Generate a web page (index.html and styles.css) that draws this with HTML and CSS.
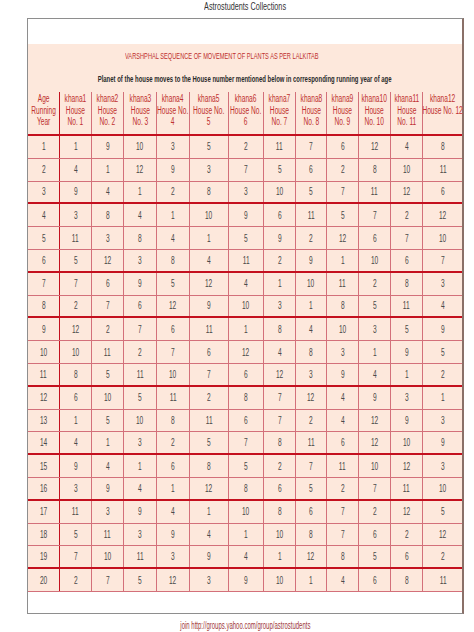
FILE: index.html
```html
<!DOCTYPE html>
<html>
<head>
<meta charset="utf-8">
<link rel="stylesheet" href="styles.css">
</head>
<body>
<div class="page-title"><span class="sq">Astrostudents Collections</span></div>
<div class="frame">
  <div class="gap"></div>
  <div class="sheet">
    <div class="heading">
      <div class="title"><span class="sq">VARSHPHAL SEQUENCE OF MOVEMENT OF PLANTS AS PER LALKITAB</span></div>
      <div class="subtitle"><span class="sq">Planet of the house moves to the House number mentioned below in corresponding running year of age</span></div>
    </div>
    <div class="grid">
      <div class="row head thick">
        <div class="c"><span>Age<br>Running<br>Year</span></div>
        <div class="c"><span>khana1<br>House<br>No. 1</span></div>
        <div class="c"><span>khana2<br>House<br>No. 2</span></div>
        <div class="c"><span>khana3<br>House<br>No. 3</span></div>
        <div class="c"><span>khana4<br>House No.<br>4</span></div>
        <div class="c"><span>khana5<br>House No.<br>5</span></div>
        <div class="c"><span>khana6<br>House No.<br>6</span></div>
        <div class="c"><span>khana7<br>House<br>No. 7</span></div>
        <div class="c"><span>khana8<br>House<br>No. 8</span></div>
        <div class="c"><span>khana9<br>House<br>No. 9</span></div>
        <div class="c"><span>khana10<br>House<br>No. 10</span></div>
        <div class="c"><span>khana11<br>House<br>No. 11</span></div>
        <div class="c"><span>khana12<br>House No. 12</span></div>
      </div>
      <div class="row"><div class="c"><span>1</span></div><div class="c"><span>1</span></div><div class="c"><span>9</span></div><div class="c"><span>10</span></div><div class="c"><span>3</span></div><div class="c"><span>5</span></div><div class="c"><span>2</span></div><div class="c"><span>11</span></div><div class="c"><span>7</span></div><div class="c"><span>6</span></div><div class="c"><span>12</span></div><div class="c"><span>4</span></div><div class="c"><span>8</span></div></div>
      <div class="row"><div class="c"><span>2</span></div><div class="c"><span>4</span></div><div class="c"><span>1</span></div><div class="c"><span>12</span></div><div class="c"><span>9</span></div><div class="c"><span>3</span></div><div class="c"><span>7</span></div><div class="c"><span>5</span></div><div class="c"><span>6</span></div><div class="c"><span>2</span></div><div class="c"><span>8</span></div><div class="c"><span>10</span></div><div class="c"><span>11</span></div></div>
      <div class="row thick"><div class="c"><span>3</span></div><div class="c"><span>9</span></div><div class="c"><span>4</span></div><div class="c"><span>1</span></div><div class="c"><span>2</span></div><div class="c"><span>8</span></div><div class="c"><span>3</span></div><div class="c"><span>10</span></div><div class="c"><span>5</span></div><div class="c"><span>7</span></div><div class="c"><span>11</span></div><div class="c"><span>12</span></div><div class="c"><span>6</span></div></div>
      <div class="row"><div class="c"><span>4</span></div><div class="c"><span>3</span></div><div class="c"><span>8</span></div><div class="c"><span>4</span></div><div class="c"><span>1</span></div><div class="c"><span>10</span></div><div class="c"><span>9</span></div><div class="c"><span>6</span></div><div class="c"><span>11</span></div><div class="c"><span>5</span></div><div class="c"><span>7</span></div><div class="c"><span>2</span></div><div class="c"><span>12</span></div></div>
      <div class="row"><div class="c"><span>5</span></div><div class="c"><span>11</span></div><div class="c"><span>3</span></div><div class="c"><span>8</span></div><div class="c"><span>4</span></div><div class="c"><span>1</span></div><div class="c"><span>5</span></div><div class="c"><span>9</span></div><div class="c"><span>2</span></div><div class="c"><span>12</span></div><div class="c"><span>6</span></div><div class="c"><span>7</span></div><div class="c"><span>10</span></div></div>
      <div class="row thick"><div class="c"><span>6</span></div><div class="c"><span>5</span></div><div class="c"><span>12</span></div><div class="c"><span>3</span></div><div class="c"><span>8</span></div><div class="c"><span>4</span></div><div class="c"><span>11</span></div><div class="c"><span>2</span></div><div class="c"><span>9</span></div><div class="c"><span>1</span></div><div class="c"><span>10</span></div><div class="c"><span>6</span></div><div class="c"><span>7</span></div></div>
      <div class="row"><div class="c"><span>7</span></div><div class="c"><span>7</span></div><div class="c"><span>6</span></div><div class="c"><span>9</span></div><div class="c"><span>5</span></div><div class="c"><span>12</span></div><div class="c"><span>4</span></div><div class="c"><span>1</span></div><div class="c"><span>10</span></div><div class="c"><span>11</span></div><div class="c"><span>2</span></div><div class="c"><span>8</span></div><div class="c"><span>3</span></div></div>
      <div class="row thick"><div class="c"><span>8</span></div><div class="c"><span>2</span></div><div class="c"><span>7</span></div><div class="c"><span>6</span></div><div class="c"><span>12</span></div><div class="c"><span>9</span></div><div class="c"><span>10</span></div><div class="c"><span>3</span></div><div class="c"><span>1</span></div><div class="c"><span>8</span></div><div class="c"><span>5</span></div><div class="c"><span>11</span></div><div class="c"><span>4</span></div></div>
      <div class="row"><div class="c"><span>9</span></div><div class="c"><span>12</span></div><div class="c"><span>2</span></div><div class="c"><span>7</span></div><div class="c"><span>6</span></div><div class="c"><span>11</span></div><div class="c"><span>1</span></div><div class="c"><span>8</span></div><div class="c"><span>4</span></div><div class="c"><span>10</span></div><div class="c"><span>3</span></div><div class="c"><span>5</span></div><div class="c"><span>9</span></div></div>
      <div class="row"><div class="c"><span>10</span></div><div class="c"><span>10</span></div><div class="c"><span>11</span></div><div class="c"><span>2</span></div><div class="c"><span>7</span></div><div class="c"><span>6</span></div><div class="c"><span>12</span></div><div class="c"><span>4</span></div><div class="c"><span>8</span></div><div class="c"><span>3</span></div><div class="c"><span>1</span></div><div class="c"><span>9</span></div><div class="c"><span>5</span></div></div>
      <div class="row thick"><div class="c"><span>11</span></div><div class="c"><span>8</span></div><div class="c"><span>5</span></div><div class="c"><span>11</span></div><div class="c"><span>10</span></div><div class="c"><span>7</span></div><div class="c"><span>6</span></div><div class="c"><span>12</span></div><div class="c"><span>3</span></div><div class="c"><span>9</span></div><div class="c"><span>4</span></div><div class="c"><span>1</span></div><div class="c"><span>2</span></div></div>
      <div class="row"><div class="c"><span>12</span></div><div class="c"><span>6</span></div><div class="c"><span>10</span></div><div class="c"><span>5</span></div><div class="c"><span>11</span></div><div class="c"><span>2</span></div><div class="c"><span>8</span></div><div class="c"><span>7</span></div><div class="c"><span>12</span></div><div class="c"><span>4</span></div><div class="c"><span>9</span></div><div class="c"><span>3</span></div><div class="c"><span>1</span></div></div>
      <div class="row"><div class="c"><span>13</span></div><div class="c"><span>1</span></div><div class="c"><span>5</span></div><div class="c"><span>10</span></div><div class="c"><span>8</span></div><div class="c"><span>11</span></div><div class="c"><span>6</span></div><div class="c"><span>7</span></div><div class="c"><span>2</span></div><div class="c"><span>4</span></div><div class="c"><span>12</span></div><div class="c"><span>9</span></div><div class="c"><span>3</span></div></div>
      <div class="row thick"><div class="c"><span>14</span></div><div class="c"><span>4</span></div><div class="c"><span>1</span></div><div class="c"><span>3</span></div><div class="c"><span>2</span></div><div class="c"><span>5</span></div><div class="c"><span>7</span></div><div class="c"><span>8</span></div><div class="c"><span>11</span></div><div class="c"><span>6</span></div><div class="c"><span>12</span></div><div class="c"><span>10</span></div><div class="c"><span>9</span></div></div>
      <div class="row"><div class="c"><span>15</span></div><div class="c"><span>9</span></div><div class="c"><span>4</span></div><div class="c"><span>1</span></div><div class="c"><span>6</span></div><div class="c"><span>8</span></div><div class="c"><span>5</span></div><div class="c"><span>2</span></div><div class="c"><span>7</span></div><div class="c"><span>11</span></div><div class="c"><span>10</span></div><div class="c"><span>12</span></div><div class="c"><span>3</span></div></div>
      <div class="row thick"><div class="c"><span>16</span></div><div class="c"><span>3</span></div><div class="c"><span>9</span></div><div class="c"><span>4</span></div><div class="c"><span>1</span></div><div class="c"><span>12</span></div><div class="c"><span>8</span></div><div class="c"><span>6</span></div><div class="c"><span>5</span></div><div class="c"><span>2</span></div><div class="c"><span>7</span></div><div class="c"><span>11</span></div><div class="c"><span>10</span></div></div>
      <div class="row"><div class="c"><span>17</span></div><div class="c"><span>11</span></div><div class="c"><span>3</span></div><div class="c"><span>9</span></div><div class="c"><span>4</span></div><div class="c"><span>1</span></div><div class="c"><span>10</span></div><div class="c"><span>8</span></div><div class="c"><span>6</span></div><div class="c"><span>7</span></div><div class="c"><span>2</span></div><div class="c"><span>12</span></div><div class="c"><span>5</span></div></div>
      <div class="row"><div class="c"><span>18</span></div><div class="c"><span>5</span></div><div class="c"><span>11</span></div><div class="c"><span>3</span></div><div class="c"><span>9</span></div><div class="c"><span>4</span></div><div class="c"><span>1</span></div><div class="c"><span>10</span></div><div class="c"><span>8</span></div><div class="c"><span>7</span></div><div class="c"><span>6</span></div><div class="c"><span>2</span></div><div class="c"><span>12</span></div></div>
      <div class="row thick"><div class="c"><span>19</span></div><div class="c"><span>7</span></div><div class="c"><span>10</span></div><div class="c"><span>11</span></div><div class="c"><span>3</span></div><div class="c"><span>9</span></div><div class="c"><span>4</span></div><div class="c"><span>1</span></div><div class="c"><span>12</span></div><div class="c"><span>8</span></div><div class="c"><span>5</span></div><div class="c"><span>6</span></div><div class="c"><span>2</span></div></div>
      <div class="row"><div class="c"><span>20</span></div><div class="c"><span>2</span></div><div class="c"><span>7</span></div><div class="c"><span>5</span></div><div class="c"><span>12</span></div><div class="c"><span>3</span></div><div class="c"><span>9</span></div><div class="c"><span>10</span></div><div class="c"><span>1</span></div><div class="c"><span>4</span></div><div class="c"><span>6</span></div><div class="c"><span>8</span></div><div class="c"><span>11</span></div></div>
    </div>
  </div>
</div>
<div class="footer"><span class="sq">join http://groups.yahoo.com/group/astrostudents</span></div>
</body>
</html>
```
FILE: styles.css
```css
* { box-sizing: border-box; }
html, body { margin: 0; padding: 0; background: #fff; }
body {
  width: 474px;
  height: 632px;
  font-family: "Liberation Sans", Arial, sans-serif;
  color: #444;
}
.sq {
  display: inline-block;
  white-space: nowrap;
}
.page-title {
  margin-left: 27px;
  width: 437px;
  height: 18px;
  display: flex;
  justify-content: center;
  font-size: 11px;
  line-height: 13px;
  color: #333;
}
.page-title .sq { transform: scaleX(0.66); }
.frame {
  margin-left: 27px;
  width: 437px;
  height: 596px;
  border: 1px solid #8e8e8e;
  border-right: 2px solid #8a7068;
  background: #fff;
}
.gap { height: 25px; }
.sheet { background: #fde8dc; }
.heading { height: 48px; padding-top: 7px; }
.title {
  font-size: 9px;
  line-height: 11px;
  color: #c0302e;
  padding-left: 97px;
}
.title .sq { transform: scaleX(0.63); transform-origin: left center; }
.subtitle {
  display: flex;
  justify-content: center;
  font-size: 9.3px;
  font-weight: bold;
  line-height: 11px;
  color: #2a2a2a;
  margin-top: 12px;
}
.subtitle .sq { transform: scaleX(0.64); }
.grid { display: flex; flex-direction: column; }
.row {
  display: grid;
  grid-template-columns: 32px 32px 32px 33px 33px 39px 35px 32px 31px 32px 32px 32px 40px;
  height: 22.8px;
  border-bottom: 1px solid #d3707a;
}
.row.thick { border-bottom: 2px solid #c4101e; }
.c {
  border-right: 1px solid #d3707a;
  display: flex;
  align-items: center;
  justify-content: center;
  font-size: 10px;
  color: #4a4a4a;
}
.c > span {
  display: inline-block;
  white-space: nowrap;
  transform: scaleX(0.66);
}
.c:first-child { border-right: 1.5px solid #c4101e; }
.c:last-child { border-right: 0; }
.row.head { height: 44px; }
.row.head .c {
  align-items: flex-start;
  text-align: center;
  font-size: 10px;
  line-height: 11.6px;
  padding-top: 1px;
  color: #c0302e;
}
.footer {
  margin-left: 27px;
  width: 437px;
  display: flex;
  justify-content: center;
  font-size: 10px;
  line-height: 12px;
  color: #a03838;
  margin-top: 6px;
}
.footer .sq { transform: scaleX(0.6); }
```
